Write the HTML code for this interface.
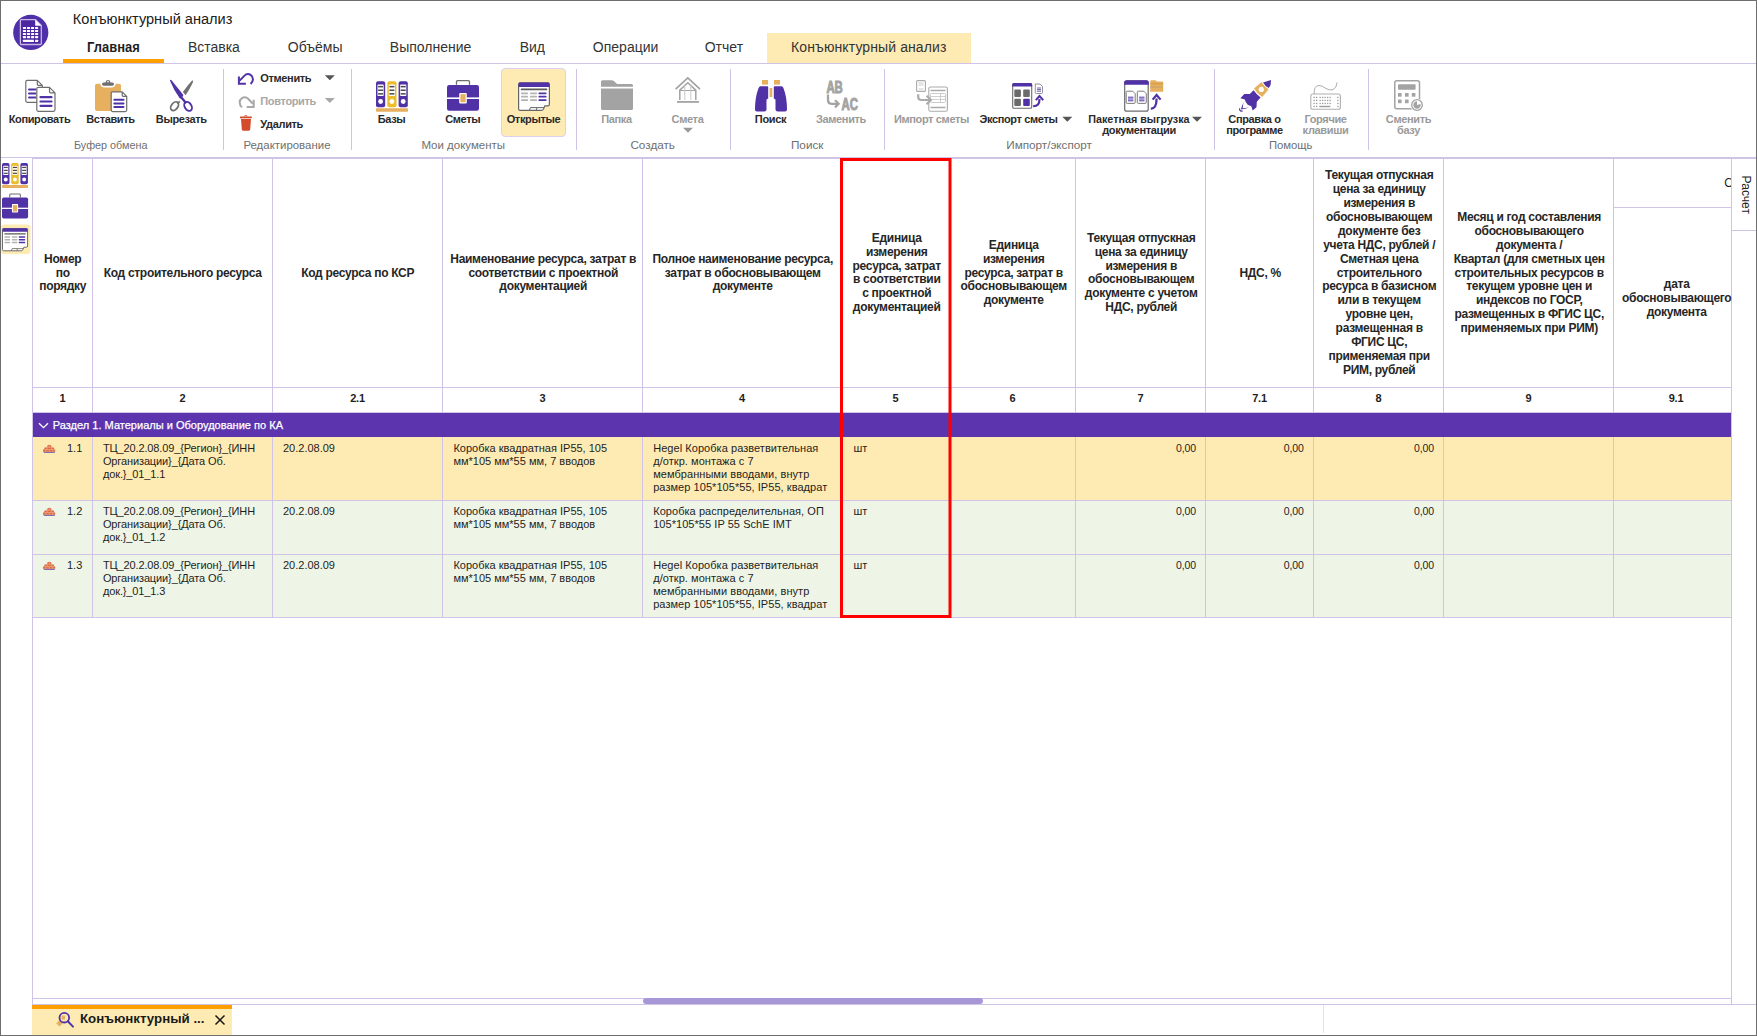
<!DOCTYPE html>
<html><head><meta charset="utf-8"><title>Конъюнктурный анализ</title>
<style>
html,body{margin:0;padding:0;width:1757px;height:1036px;overflow:hidden;background:#fff;}
svg{display:block;font-family:"Liberation Sans", sans-serif;}
</style></head><body>
<svg width="1757" height="1036" viewBox="0 0 1757 1036">
<rect x="0" y="0" width="1757" height="1036" fill="#ffffff" />
<circle cx="30.75" cy="32.45" r="17.6" fill="#5030a8"/>
<path d="M21.2 19.7 H35.4 L41.3 25.6 V43.6 Q41.3 44.5 40.4 44.5 H21.2 Q20.4 44.5 20.4 43.6 V20.6 Q20.4 19.7 21.2 19.7 Z" fill="#4a27a0" stroke="#c6b9e6" stroke-width="1.3"/>
<path d="M35.2 19.7 V25.8 H41.3 Z" fill="#ffffff"/>
<rect x="22.90" y="26.90" width="3.1" height="2.1" rx="0.4" fill="#ffffff"/>
<rect x="26.95" y="26.90" width="3.1" height="2.1" rx="0.4" fill="#ffffff"/>
<rect x="31.00" y="26.90" width="3.1" height="2.1" rx="0.4" fill="#ffffff"/>
<rect x="35.05" y="26.90" width="3.1" height="2.1" rx="0.4" fill="#ffffff"/>
<rect x="22.90" y="29.95" width="3.1" height="2.1" rx="0.4" fill="#ffffff"/>
<rect x="26.95" y="29.95" width="3.1" height="2.1" rx="0.4" fill="#ffffff"/>
<rect x="31.00" y="29.95" width="3.1" height="2.1" rx="0.4" fill="#ffffff"/>
<rect x="35.05" y="29.95" width="3.1" height="2.1" rx="0.4" fill="#ffffff"/>
<rect x="22.90" y="33.00" width="3.1" height="2.1" rx="0.4" fill="#ffffff"/>
<rect x="26.95" y="33.00" width="3.1" height="2.1" rx="0.4" fill="#ffffff"/>
<rect x="31.00" y="33.00" width="3.1" height="2.1" rx="0.4" fill="#ffffff"/>
<rect x="35.05" y="33.00" width="3.1" height="2.1" rx="0.4" fill="#ffffff"/>
<rect x="22.90" y="36.05" width="3.1" height="2.1" rx="0.4" fill="#ffffff"/>
<rect x="26.95" y="36.05" width="3.1" height="2.1" rx="0.4" fill="#ffffff"/>
<rect x="31.00" y="36.05" width="3.1" height="2.1" rx="0.4" fill="#ffffff"/>
<rect x="35.05" y="36.05" width="3.1" height="2.1" rx="0.4" fill="#ffffff"/>
<rect x="22.9" y="39.8" width="11.1" height="2.2" rx="0.4" fill="#ffffff"/>
<rect x="35.05" y="39.8" width="3.1" height="2.2" rx="0.4" fill="#ffffff"/>
<text x="72.8" y="24" fill="#202020" text-anchor="start" style="font-size:14px;font-weight:400;"  textLength="159.6" lengthAdjust="spacingAndGlyphs">Конъюнктурный анализ</text>
<rect x="767" y="33" width="204" height="30" fill="#feebb3" />
<text x="87.1" y="51.6" fill="#1e1e1e" text-anchor="start" style="font-size:14px;font-weight:700;"  textLength="52.6" lengthAdjust="spacingAndGlyphs">Главная</text>
<text x="213.9" y="51.6" fill="#333333" text-anchor="middle" style="font-size:14px;font-weight:400;letter-spacing:0px;" >Вставка</text>
<text x="315.2" y="51.6" fill="#333333" text-anchor="middle" style="font-size:14px;font-weight:400;letter-spacing:0px;" >Объёмы</text>
<text x="430.6" y="51.6" fill="#333333" text-anchor="middle" style="font-size:14px;font-weight:400;letter-spacing:0px;" >Выполнение</text>
<text x="532.3" y="51.6" fill="#333333" text-anchor="middle" style="font-size:14px;font-weight:400;letter-spacing:0px;" >Вид</text>
<text x="625.6" y="51.6" fill="#333333" text-anchor="middle" style="font-size:14px;font-weight:400;letter-spacing:0px;" >Операции</text>
<text x="723.9" y="51.6" fill="#333333" text-anchor="middle" style="font-size:14px;font-weight:400;letter-spacing:0px;" >Отчет</text>
<text x="868.8" y="51.6" fill="#333333" text-anchor="middle" style="font-size:14px;font-weight:400;letter-spacing:0.1px;" >Конъюнктурный анализ</text>
<rect x="63" y="59" width="101" height="4" fill="#ffa000" />
<rect x="1" y="63" width="1755" height="1" fill="#cfc3e8" />
<rect x="223" y="69" width="1" height="81" fill="#cfc3e8" />
<rect x="351" y="69" width="1" height="81" fill="#cfc3e8" />
<rect x="576" y="69" width="1" height="81" fill="#cfc3e8" />
<rect x="730" y="69" width="1" height="81" fill="#cfc3e8" />
<rect x="884" y="69" width="1" height="81" fill="#cfc3e8" />
<rect x="1214" y="69" width="1" height="81" fill="#cfc3e8" />
<rect x="1368" y="69" width="1" height="81" fill="#cfc3e8" />
<rect x="1" y="157" width="1755" height="1" fill="#cfc3e8" />
<text x="74.0" y="149" fill="#6f6f6f" text-anchor="start" style="font-size:11px;font-weight:400;"  textLength="73.5" lengthAdjust="spacingAndGlyphs">Буфер обмена</text>
<text x="243.4" y="149" fill="#6f6f6f" text-anchor="start" style="font-size:11px;font-weight:400;"  textLength="87.1" lengthAdjust="spacingAndGlyphs">Редактирование</text>
<text x="421.4" y="149" fill="#6f6f6f" text-anchor="start" style="font-size:11px;font-weight:400;"  textLength="83.7" lengthAdjust="spacingAndGlyphs">Мои документы</text>
<text x="630.4" y="149" fill="#6f6f6f" text-anchor="start" style="font-size:11px;font-weight:400;"  textLength="44.6" lengthAdjust="spacingAndGlyphs">Создать</text>
<text x="790.9" y="149" fill="#6f6f6f" text-anchor="start" style="font-size:11px;font-weight:400;"  textLength="32.6" lengthAdjust="spacingAndGlyphs">Поиск</text>
<text x="1006.3" y="149" fill="#6f6f6f" text-anchor="start" style="font-size:11px;font-weight:400;"  textLength="85.6" lengthAdjust="spacingAndGlyphs">Импорт/экспорт</text>
<text x="1269.0" y="149" fill="#6f6f6f" text-anchor="start" style="font-size:11px;font-weight:400;"  textLength="43.5" lengthAdjust="spacingAndGlyphs">Помощь</text>
<rect x="501.5" y="68.5" width="64" height="68" rx="3.5" fill="#feebb3" stroke="#dccff0" stroke-width="1"/>
<text x="39.5" y="122.8" fill="#2a2a2a" text-anchor="middle" style="font-size:11px;font-weight:700;letter-spacing:-0.35px;" >Копировать</text>
<text x="110.5" y="122.8" fill="#2a2a2a" text-anchor="middle" style="font-size:11px;font-weight:700;letter-spacing:-0.35px;" >Вставить</text>
<text x="181.3" y="122.8" fill="#2a2a2a" text-anchor="middle" style="font-size:11px;font-weight:700;letter-spacing:-0.35px;" >Вырезать</text>
<text x="391.5" y="122.8" fill="#2a2a2a" text-anchor="middle" style="font-size:11px;font-weight:700;letter-spacing:-0.35px;" >Базы</text>
<text x="462.7" y="122.8" fill="#2a2a2a" text-anchor="middle" style="font-size:11px;font-weight:700;letter-spacing:-0.35px;" >Сметы</text>
<text x="533.5" y="122.8" fill="#2a2a2a" text-anchor="middle" style="font-size:11px;font-weight:700;letter-spacing:-0.35px;" >Открытые</text>
<text x="616.5" y="122.8" fill="#9a9a9a" text-anchor="middle" style="font-size:11px;font-weight:700;letter-spacing:-0.35px;" >Папка</text>
<text x="687.5" y="122.8" fill="#9a9a9a" text-anchor="middle" style="font-size:11px;font-weight:700;letter-spacing:-0.35px;" >Смета</text>
<text x="770.5" y="122.8" fill="#2a2a2a" text-anchor="middle" style="font-size:11px;font-weight:700;letter-spacing:-0.35px;" >Поиск</text>
<text x="841" y="122.8" fill="#9a9a9a" text-anchor="middle" style="font-size:11px;font-weight:700;letter-spacing:-0.35px;" >Заменить</text>
<text x="931.5" y="122.8" fill="#9a9a9a" text-anchor="middle" style="font-size:11px;font-weight:700;letter-spacing:-0.35px;" >Импорт сметы</text>
<text x="1018.5" y="122.8" fill="#2a2a2a" text-anchor="middle" style="font-size:11px;font-weight:700;letter-spacing:-0.35px;" >Экспорт сметы</text>
<text x="1088.2" y="122.8" fill="#2a2a2a" text-anchor="start" style="font-size:11px;font-weight:700;"  textLength="101.4" lengthAdjust="spacingAndGlyphs">Пакетная выгрузка</text>
<text x="1139" y="133.6" fill="#2a2a2a" text-anchor="middle" style="font-size:11px;font-weight:700;letter-spacing:-0.35px;" >документации</text>
<text x="1254.5" y="122.8" fill="#2a2a2a" text-anchor="middle" style="font-size:11px;font-weight:700;letter-spacing:-0.35px;" >Справка о</text>
<text x="1254.5" y="133.6" fill="#2a2a2a" text-anchor="middle" style="font-size:11px;font-weight:700;letter-spacing:-0.35px;" >программе</text>
<text x="1325.5" y="122.8" fill="#9a9a9a" text-anchor="middle" style="font-size:11px;font-weight:700;letter-spacing:-0.35px;" >Горячие</text>
<text x="1325.5" y="133.6" fill="#9a9a9a" text-anchor="middle" style="font-size:11px;font-weight:700;letter-spacing:-0.35px;" >клавиши</text>
<text x="1408.5" y="122.8" fill="#9a9a9a" text-anchor="middle" style="font-size:11px;font-weight:700;letter-spacing:-0.35px;" >Сменить</text>
<text x="1408.5" y="133.6" fill="#9a9a9a" text-anchor="middle" style="font-size:11px;font-weight:700;letter-spacing:-0.35px;" >базу</text>
<text x="260.3" y="81.8" fill="#2a2a2a" text-anchor="start" style="font-size:11px;font-weight:700;letter-spacing:-0.35px;" >Отменить</text>
<text x="260.3" y="105" fill="#a8a8a8" text-anchor="start" style="font-size:11px;font-weight:700;letter-spacing:-0.35px;" >Повторить</text>
<text x="260.3" y="128.2" fill="#2a2a2a" text-anchor="start" style="font-size:11px;font-weight:700;letter-spacing:-0.35px;" >Удалить</text>
<path d="M324.8 75.2 H334.8 L329.8 80.2 Z" fill="#555555"/>
<path d="M324.8 98.0 H334.8 L329.8 103.0 Z" fill="#a8a8a8"/>
<path d="M683.0 127.80000000000001 H693.0 L688 132.8 Z" fill="#9a9a9a"/>
<path d="M1062.3 116.8 H1072.3 L1067.3 121.8 Z" fill="#555555"/>
<path d="M1192.0 116.8 H1202.0 L1197 121.8 Z" fill="#555555"/>
<rect x="32" y="413" width="1699" height="24" fill="#5c35ae" />
<rect x="32" y="437" width="1699" height="63" fill="#feebb3" />
<rect x="32" y="500" width="1699" height="117" fill="#eef5e6" />
<rect x="32" y="158" width="1724" height="1" fill="#cfc3e8" />
<rect x="32" y="387" width="1699" height="1" fill="#cfc3e8" />
<rect x="32" y="412" width="1699" height="1" fill="#cfc3e8" />
<rect x="32" y="500" width="1699" height="1" fill="#cfc3e8" />
<rect x="32" y="554" width="1699" height="1" fill="#cfc3e8" />
<rect x="32" y="617" width="1699" height="1" fill="#cfc3e8" />
<rect x="1613" y="207" width="118" height="1" fill="#cfc3e8" />
<rect x="32" y="158" width="1" height="846" fill="#cfc3e8" />
<rect x="92" y="158" width="1" height="254" fill="#cfc3e8" />
<rect x="92" y="437" width="1" height="180" fill="#cfc3e8" />
<rect x="272" y="158" width="1" height="254" fill="#cfc3e8" />
<rect x="272" y="437" width="1" height="180" fill="#cfc3e8" />
<rect x="442" y="158" width="1" height="254" fill="#cfc3e8" />
<rect x="442" y="437" width="1" height="180" fill="#cfc3e8" />
<rect x="642" y="158" width="1" height="254" fill="#cfc3e8" />
<rect x="642" y="437" width="1" height="180" fill="#cfc3e8" />
<rect x="841" y="158" width="1" height="254" fill="#cfc3e8" />
<rect x="841" y="437" width="1" height="180" fill="#cfc3e8" />
<rect x="949" y="158" width="1" height="254" fill="#cfc3e8" />
<rect x="949" y="437" width="1" height="180" fill="#cfc3e8" />
<rect x="1075" y="158" width="1" height="254" fill="#cfc3e8" />
<rect x="1075" y="437" width="1" height="180" fill="#cfc3e8" />
<rect x="1205" y="158" width="1" height="254" fill="#cfc3e8" />
<rect x="1205" y="437" width="1" height="180" fill="#cfc3e8" />
<rect x="1313" y="158" width="1" height="254" fill="#cfc3e8" />
<rect x="1313" y="437" width="1" height="180" fill="#cfc3e8" />
<rect x="1443" y="158" width="1" height="254" fill="#cfc3e8" />
<rect x="1443" y="437" width="1" height="180" fill="#cfc3e8" />
<rect x="1613" y="158" width="1" height="254" fill="#cfc3e8" />
<rect x="1613" y="437" width="1" height="180" fill="#cfc3e8" />
<rect x="1731" y="158" width="1" height="846" fill="#cfc3e8" />
<rect x="32" y="998" width="1699" height="1" fill="#cfc3e8" />
<rect x="32" y="1004" width="1724" height="1" fill="#cfc3e8" />
<rect x="1731" y="230" width="25" height="1" fill="#cfc3e8" />
<text x="62.7" y="262.6" fill="#262626" text-anchor="middle" style="font-size:12px;font-weight:700;letter-spacing:-0.3px;" >Номер</text>
<text x="62.7" y="276.5" fill="#262626" text-anchor="middle" style="font-size:12px;font-weight:700;letter-spacing:-0.3px;" >по</text>
<text x="62.7" y="290.4" fill="#262626" text-anchor="middle" style="font-size:12px;font-weight:700;letter-spacing:-0.3px;" >порядку</text>
<text x="182.7" y="276.5" fill="#262626" text-anchor="middle" style="font-size:12px;font-weight:700;letter-spacing:-0.3px;" >Код строительного ресурса</text>
<text x="357.7" y="276.5" fill="#262626" text-anchor="middle" style="font-size:12px;font-weight:700;letter-spacing:-0.3px;" >Код ресурса по КСР</text>
<text x="543.2" y="262.6" fill="#262626" text-anchor="middle" style="font-size:12px;font-weight:700;letter-spacing:-0.3px;" >Наименование ресурса, затрат в</text>
<text x="543.2" y="276.5" fill="#262626" text-anchor="middle" style="font-size:12px;font-weight:700;letter-spacing:-0.3px;" >соответствии с проектной</text>
<text x="543.2" y="290.4" fill="#262626" text-anchor="middle" style="font-size:12px;font-weight:700;letter-spacing:-0.3px;" >документацией</text>
<text x="742.7" y="262.6" fill="#262626" text-anchor="middle" style="font-size:12px;font-weight:700;letter-spacing:-0.3px;" >Полное наименование ресурса,</text>
<text x="742.7" y="276.5" fill="#262626" text-anchor="middle" style="font-size:12px;font-weight:700;letter-spacing:-0.3px;" >затрат в обосновывающем</text>
<text x="742.7" y="290.4" fill="#262626" text-anchor="middle" style="font-size:12px;font-weight:700;letter-spacing:-0.3px;" >документе</text>
<text x="896.7" y="241.75" fill="#262626" text-anchor="middle" style="font-size:12px;font-weight:700;letter-spacing:-0.3px;" >Единица</text>
<text x="896.7" y="255.65" fill="#262626" text-anchor="middle" style="font-size:12px;font-weight:700;letter-spacing:-0.3px;" >измерения</text>
<text x="896.7" y="269.55" fill="#262626" text-anchor="middle" style="font-size:12px;font-weight:700;letter-spacing:-0.3px;" >ресурса, затрат</text>
<text x="896.7" y="283.45" fill="#262626" text-anchor="middle" style="font-size:12px;font-weight:700;letter-spacing:-0.3px;" >в соответствии</text>
<text x="896.7" y="297.35" fill="#262626" text-anchor="middle" style="font-size:12px;font-weight:700;letter-spacing:-0.3px;" >с проектной</text>
<text x="896.7" y="311.25" fill="#262626" text-anchor="middle" style="font-size:12px;font-weight:700;letter-spacing:-0.3px;" >документацией</text>
<text x="1013.7" y="248.7" fill="#262626" text-anchor="middle" style="font-size:12px;font-weight:700;letter-spacing:-0.3px;" >Единица</text>
<text x="1013.7" y="262.6" fill="#262626" text-anchor="middle" style="font-size:12px;font-weight:700;letter-spacing:-0.3px;" >измерения</text>
<text x="1013.7" y="276.5" fill="#262626" text-anchor="middle" style="font-size:12px;font-weight:700;letter-spacing:-0.3px;" >ресурса, затрат в</text>
<text x="1013.7" y="290.4" fill="#262626" text-anchor="middle" style="font-size:12px;font-weight:700;letter-spacing:-0.3px;" >обосновывающем</text>
<text x="1013.7" y="304.3" fill="#262626" text-anchor="middle" style="font-size:12px;font-weight:700;letter-spacing:-0.3px;" >документе</text>
<text x="1141.2" y="241.75" fill="#262626" text-anchor="middle" style="font-size:12px;font-weight:700;letter-spacing:-0.3px;" >Текущая отпускная</text>
<text x="1141.2" y="255.65" fill="#262626" text-anchor="middle" style="font-size:12px;font-weight:700;letter-spacing:-0.3px;" >цена за единицу</text>
<text x="1141.2" y="269.55" fill="#262626" text-anchor="middle" style="font-size:12px;font-weight:700;letter-spacing:-0.3px;" >измерения в</text>
<text x="1141.2" y="283.45" fill="#262626" text-anchor="middle" style="font-size:12px;font-weight:700;letter-spacing:-0.3px;" >обосновывающем</text>
<text x="1141.2" y="297.35" fill="#262626" text-anchor="middle" style="font-size:12px;font-weight:700;letter-spacing:-0.3px;" >документе с учетом</text>
<text x="1141.2" y="311.25" fill="#262626" text-anchor="middle" style="font-size:12px;font-weight:700;letter-spacing:-0.3px;" >НДС, рублей</text>
<text x="1260.2" y="276.5" fill="#262626" text-anchor="middle" style="font-size:12px;font-weight:700;letter-spacing:-0.3px;" >НДС, %</text>
<text x="1379.2" y="179.2" fill="#262626" text-anchor="middle" style="font-size:12px;font-weight:700;letter-spacing:-0.3px;" >Текущая отпускная</text>
<text x="1379.2" y="193.1" fill="#262626" text-anchor="middle" style="font-size:12px;font-weight:700;letter-spacing:-0.3px;" >цена за единицу</text>
<text x="1379.2" y="207.0" fill="#262626" text-anchor="middle" style="font-size:12px;font-weight:700;letter-spacing:-0.3px;" >измерения в</text>
<text x="1379.2" y="220.9" fill="#262626" text-anchor="middle" style="font-size:12px;font-weight:700;letter-spacing:-0.3px;" >обосновывающем</text>
<text x="1379.2" y="234.8" fill="#262626" text-anchor="middle" style="font-size:12px;font-weight:700;letter-spacing:-0.3px;" >документе без</text>
<text x="1379.2" y="248.7" fill="#262626" text-anchor="middle" style="font-size:12px;font-weight:700;letter-spacing:-0.3px;" >учета НДС, рублей /</text>
<text x="1379.2" y="262.6" fill="#262626" text-anchor="middle" style="font-size:12px;font-weight:700;letter-spacing:-0.3px;" >Сметная цена</text>
<text x="1379.2" y="276.5" fill="#262626" text-anchor="middle" style="font-size:12px;font-weight:700;letter-spacing:-0.3px;" >строительного</text>
<text x="1379.2" y="290.4" fill="#262626" text-anchor="middle" style="font-size:12px;font-weight:700;letter-spacing:-0.3px;" >ресурса в базисном</text>
<text x="1379.2" y="304.3" fill="#262626" text-anchor="middle" style="font-size:12px;font-weight:700;letter-spacing:-0.3px;" >или в текущем</text>
<text x="1379.2" y="318.2" fill="#262626" text-anchor="middle" style="font-size:12px;font-weight:700;letter-spacing:-0.3px;" >уровне цен,</text>
<text x="1379.2" y="332.1" fill="#262626" text-anchor="middle" style="font-size:12px;font-weight:700;letter-spacing:-0.3px;" >размещенная в</text>
<text x="1379.2" y="346.0" fill="#262626" text-anchor="middle" style="font-size:12px;font-weight:700;letter-spacing:-0.3px;" >ФГИС ЦС,</text>
<text x="1379.2" y="359.9" fill="#262626" text-anchor="middle" style="font-size:12px;font-weight:700;letter-spacing:-0.3px;" >применяемая при</text>
<text x="1379.2" y="373.8" fill="#262626" text-anchor="middle" style="font-size:12px;font-weight:700;letter-spacing:-0.3px;" >РИМ, рублей</text>
<text x="1529.2" y="220.9" fill="#262626" text-anchor="middle" style="font-size:12px;font-weight:700;letter-spacing:-0.3px;" >Месяц и год составления</text>
<text x="1529.2" y="234.8" fill="#262626" text-anchor="middle" style="font-size:12px;font-weight:700;letter-spacing:-0.3px;" >обосновывающего</text>
<text x="1529.2" y="248.7" fill="#262626" text-anchor="middle" style="font-size:12px;font-weight:700;letter-spacing:-0.3px;" >документа /</text>
<text x="1529.2" y="262.6" fill="#262626" text-anchor="middle" style="font-size:12px;font-weight:700;letter-spacing:-0.3px;" >Квартал (для сметных цен</text>
<text x="1529.2" y="276.5" fill="#262626" text-anchor="middle" style="font-size:12px;font-weight:700;letter-spacing:-0.3px;" >строительных ресурсов в</text>
<text x="1529.2" y="290.4" fill="#262626" text-anchor="middle" style="font-size:12px;font-weight:700;letter-spacing:-0.3px;" >текущем уровне цен и</text>
<text x="1529.2" y="304.3" fill="#262626" text-anchor="middle" style="font-size:12px;font-weight:700;letter-spacing:-0.3px;" >индексов по ГОСР,</text>
<text x="1529.2" y="318.2" fill="#262626" text-anchor="middle" style="font-size:12px;font-weight:700;letter-spacing:-0.3px;" >размещенных в ФГИС ЦС,</text>
<text x="1529.2" y="332.1" fill="#262626" text-anchor="middle" style="font-size:12px;font-weight:700;letter-spacing:-0.3px;" >применяемых при РИМ)</text>
<text x="1676.7" y="288.1" fill="#262626" text-anchor="middle" style="font-size:12px;font-weight:700;letter-spacing:-0.3px;" >дата</text>
<text x="1676.7" y="302.0" fill="#262626" text-anchor="middle" style="font-size:12px;font-weight:700;letter-spacing:-0.3px;" >обосновывающего</text>
<text x="1676.7" y="315.9" fill="#262626" text-anchor="middle" style="font-size:12px;font-weight:700;letter-spacing:-0.3px;" >документа</text>
<clipPath id="c91"><rect x="1614" y="159" width="117" height="48"/></clipPath>
<text x="1724.2" y="186.6" fill="#1e1e1e" text-anchor="start" style="font-size:12px;font-weight:400;" clip-path="url(#c91)">О</text>
<text x="62.5" y="401.8" fill="#1e1e1e" text-anchor="middle" style="font-size:11px;font-weight:700;letter-spacing:-0.2px;" >1</text>
<text x="182.5" y="401.8" fill="#1e1e1e" text-anchor="middle" style="font-size:11px;font-weight:700;letter-spacing:-0.2px;" >2</text>
<text x="357.5" y="401.8" fill="#1e1e1e" text-anchor="middle" style="font-size:11px;font-weight:700;letter-spacing:-0.2px;" >2.1</text>
<text x="542.5" y="401.8" fill="#1e1e1e" text-anchor="middle" style="font-size:11px;font-weight:700;letter-spacing:-0.2px;" >3</text>
<text x="742.0" y="401.8" fill="#1e1e1e" text-anchor="middle" style="font-size:11px;font-weight:700;letter-spacing:-0.2px;" >4</text>
<text x="895.5" y="401.8" fill="#1e1e1e" text-anchor="middle" style="font-size:11px;font-weight:700;letter-spacing:-0.2px;" >5</text>
<text x="1012.5" y="401.8" fill="#1e1e1e" text-anchor="middle" style="font-size:11px;font-weight:700;letter-spacing:-0.2px;" >6</text>
<text x="1140.5" y="401.8" fill="#1e1e1e" text-anchor="middle" style="font-size:11px;font-weight:700;letter-spacing:-0.2px;" >7</text>
<text x="1259.5" y="401.8" fill="#1e1e1e" text-anchor="middle" style="font-size:11px;font-weight:700;letter-spacing:-0.2px;" >7.1</text>
<text x="1378.5" y="401.8" fill="#1e1e1e" text-anchor="middle" style="font-size:11px;font-weight:700;letter-spacing:-0.2px;" >8</text>
<text x="1528.5" y="401.8" fill="#1e1e1e" text-anchor="middle" style="font-size:11px;font-weight:700;letter-spacing:-0.2px;" >9</text>
<text x="1676" y="401.8" fill="#1e1e1e" text-anchor="middle" style="font-size:11px;font-weight:700;letter-spacing:-0.2px;" >9.1</text>
<path d="M39 423.2 L43.5 427.7 L48 423.2" fill="none" stroke="#ffffff" stroke-width="1.3"/>
<text x="52.8" y="428.6" fill="#ffffff" text-anchor="start" style="font-size:11px;font-weight:400;" stroke="#ffffff" stroke-width="0.25" textLength="230.2" lengthAdjust="spacingAndGlyphs">Раздел 1. Материалы и Оборудование по КА</text>
<text x="82.3" y="452" fill="#1e1e1e" text-anchor="end" style="font-size:11px;font-weight:400;" >1.1</text>
<text x="102.9" y="452" fill="#1e1e1e" text-anchor="start" style="font-size:11px;font-weight:400;letter-spacing:-0.12px;" >ТЦ_20.2.08.09_{Регион}_{ИНН</text>
<text x="102.9" y="465" fill="#1e1e1e" text-anchor="start" style="font-size:11px;font-weight:400;letter-spacing:-0.12px;" >Организации}_{Дата Об.</text>
<text x="102.9" y="478" fill="#1e1e1e" text-anchor="start" style="font-size:11px;font-weight:400;letter-spacing:-0.12px;" >док.}_01_1.1</text>
<text x="283" y="452" fill="#1e1e1e" text-anchor="start" style="font-size:11px;font-weight:400;" >20.2.08.09</text>
<text x="453.4" y="452" fill="#1e1e1e" text-anchor="start" style="font-size:11px;font-weight:400;" >Коробка квадратная IP55, 105</text>
<text x="453.4" y="465" fill="#1e1e1e" text-anchor="start" style="font-size:11px;font-weight:400;" >мм*105 мм*55 мм, 7 вводов</text>
<text x="653.2" y="452" fill="#1e1e1e" text-anchor="start" style="font-size:11px;font-weight:400;letter-spacing:0.05px;" >Hegel Коробка разветвительная</text>
<text x="653.2" y="465" fill="#1e1e1e" text-anchor="start" style="font-size:11px;font-weight:400;letter-spacing:0.05px;" >д/откр. монтажа с 7</text>
<text x="653.2" y="478" fill="#1e1e1e" text-anchor="start" style="font-size:11px;font-weight:400;letter-spacing:0.05px;" >мембранными вводами, внутр</text>
<text x="653.2" y="491" fill="#1e1e1e" text-anchor="start" style="font-size:11px;font-weight:400;letter-spacing:0.05px;" >размер 105*105*55, IP55, квадрат</text>
<text x="853.4" y="452" fill="#1e1e1e" text-anchor="start" style="font-size:11px;font-weight:400;" >шт</text>
<text x="1196" y="452" fill="#1e1e1e" text-anchor="end" style="font-size:10.5px;font-weight:400;letter-spacing:-0.1px;" >0,00</text>
<text x="1303.7" y="452" fill="#1e1e1e" text-anchor="end" style="font-size:10.5px;font-weight:400;letter-spacing:-0.1px;" >0,00</text>
<text x="1434" y="452" fill="#1e1e1e" text-anchor="end" style="font-size:10.5px;font-weight:400;letter-spacing:-0.1px;" >0,00</text>
<g transform="translate(0 444.8) scale(1 0.86) translate(0 -444.8)"><path d="M47.6 445.2 Q49.3 444.2 51 445.2 L51.6 447.6 L53.6 447.8 L54.4 450.40000000000003 L55.2 450.6 L55.2 453.0 H43 L43 450.6 L43.8 450.40000000000003 L44.8 447.8 L47 447.6 Z" fill="#dc6a45"/><path d="M46.2 447.7 H52.6 M44.2 450.40000000000003 H54.2 M49.3 445.0 V447.7 M47.4 447.7 L46.9 450.40000000000003 M51.2 447.7 L51.7 450.40000000000003 M46 450.40000000000003 L45.6 453.0 M49.3 450.40000000000003 V453.0 M52.6 450.40000000000003 L53 453.0" stroke="#f1b48c" stroke-width="0.7"/></g><rect x="43.8" y="451.85" width="11" height="1.1" fill="#7d6aa8"/>
<text x="82.3" y="515" fill="#1e1e1e" text-anchor="end" style="font-size:11px;font-weight:400;" >1.2</text>
<text x="102.9" y="515" fill="#1e1e1e" text-anchor="start" style="font-size:11px;font-weight:400;letter-spacing:-0.12px;" >ТЦ_20.2.08.09_{Регион}_{ИНН</text>
<text x="102.9" y="528" fill="#1e1e1e" text-anchor="start" style="font-size:11px;font-weight:400;letter-spacing:-0.12px;" >Организации}_{Дата Об.</text>
<text x="102.9" y="541" fill="#1e1e1e" text-anchor="start" style="font-size:11px;font-weight:400;letter-spacing:-0.12px;" >док.}_01_1.2</text>
<text x="283" y="515" fill="#1e1e1e" text-anchor="start" style="font-size:11px;font-weight:400;" >20.2.08.09</text>
<text x="453.4" y="515" fill="#1e1e1e" text-anchor="start" style="font-size:11px;font-weight:400;" >Коробка квадратная IP55, 105</text>
<text x="453.4" y="528" fill="#1e1e1e" text-anchor="start" style="font-size:11px;font-weight:400;" >мм*105 мм*55 мм, 7 вводов</text>
<text x="653.2" y="515" fill="#1e1e1e" text-anchor="start" style="font-size:11px;font-weight:400;letter-spacing:0.05px;" >Коробка распределительная, ОП</text>
<text x="653.2" y="528" fill="#1e1e1e" text-anchor="start" style="font-size:11px;font-weight:400;letter-spacing:0.05px;" >105*105*55 IP 55 SchE IMT</text>
<text x="853.4" y="515" fill="#1e1e1e" text-anchor="start" style="font-size:11px;font-weight:400;" >шт</text>
<text x="1196" y="515" fill="#1e1e1e" text-anchor="end" style="font-size:10.5px;font-weight:400;letter-spacing:-0.1px;" >0,00</text>
<text x="1303.7" y="515" fill="#1e1e1e" text-anchor="end" style="font-size:10.5px;font-weight:400;letter-spacing:-0.1px;" >0,00</text>
<text x="1434" y="515" fill="#1e1e1e" text-anchor="end" style="font-size:10.5px;font-weight:400;letter-spacing:-0.1px;" >0,00</text>
<g transform="translate(0 507.8) scale(1 0.86) translate(0 -507.8)"><path d="M47.6 508.2 Q49.3 507.2 51 508.2 L51.6 510.6 L53.6 510.8 L54.4 513.4 L55.2 513.6 L55.2 516.0 H43 L43 513.6 L43.8 513.4 L44.8 510.8 L47 510.6 Z" fill="#dc6a45"/><path d="M46.2 510.7 H52.6 M44.2 513.4 H54.2 M49.3 508.0 V510.7 M47.4 510.7 L46.9 513.4 M51.2 510.7 L51.7 513.4 M46 513.4 L45.6 516.0 M49.3 513.4 V516.0 M52.6 513.4 L53 516.0" stroke="#f1b48c" stroke-width="0.7"/></g><rect x="43.8" y="514.85" width="11" height="1.1" fill="#7d6aa8"/>
<text x="82.3" y="569" fill="#1e1e1e" text-anchor="end" style="font-size:11px;font-weight:400;" >1.3</text>
<text x="102.9" y="569" fill="#1e1e1e" text-anchor="start" style="font-size:11px;font-weight:400;letter-spacing:-0.12px;" >ТЦ_20.2.08.09_{Регион}_{ИНН</text>
<text x="102.9" y="582" fill="#1e1e1e" text-anchor="start" style="font-size:11px;font-weight:400;letter-spacing:-0.12px;" >Организации}_{Дата Об.</text>
<text x="102.9" y="595" fill="#1e1e1e" text-anchor="start" style="font-size:11px;font-weight:400;letter-spacing:-0.12px;" >док.}_01_1.3</text>
<text x="283" y="569" fill="#1e1e1e" text-anchor="start" style="font-size:11px;font-weight:400;" >20.2.08.09</text>
<text x="453.4" y="569" fill="#1e1e1e" text-anchor="start" style="font-size:11px;font-weight:400;" >Коробка квадратная IP55, 105</text>
<text x="453.4" y="582" fill="#1e1e1e" text-anchor="start" style="font-size:11px;font-weight:400;" >мм*105 мм*55 мм, 7 вводов</text>
<text x="653.2" y="569" fill="#1e1e1e" text-anchor="start" style="font-size:11px;font-weight:400;letter-spacing:0.05px;" >Hegel Коробка разветвительная</text>
<text x="653.2" y="582" fill="#1e1e1e" text-anchor="start" style="font-size:11px;font-weight:400;letter-spacing:0.05px;" >д/откр. монтажа с 7</text>
<text x="653.2" y="595" fill="#1e1e1e" text-anchor="start" style="font-size:11px;font-weight:400;letter-spacing:0.05px;" >мембранными вводами, внутр</text>
<text x="653.2" y="608" fill="#1e1e1e" text-anchor="start" style="font-size:11px;font-weight:400;letter-spacing:0.05px;" >размер 105*105*55, IP55, квадрат</text>
<text x="853.4" y="569" fill="#1e1e1e" text-anchor="start" style="font-size:11px;font-weight:400;" >шт</text>
<text x="1196" y="569" fill="#1e1e1e" text-anchor="end" style="font-size:10.5px;font-weight:400;letter-spacing:-0.1px;" >0,00</text>
<text x="1303.7" y="569" fill="#1e1e1e" text-anchor="end" style="font-size:10.5px;font-weight:400;letter-spacing:-0.1px;" >0,00</text>
<text x="1434" y="569" fill="#1e1e1e" text-anchor="end" style="font-size:10.5px;font-weight:400;letter-spacing:-0.1px;" >0,00</text>
<g transform="translate(0 561.8) scale(1 0.86) translate(0 -561.8)"><path d="M47.6 562.1999999999999 Q49.3 561.1999999999999 51 562.1999999999999 L51.6 564.5999999999999 L53.6 564.8 L54.4 567.4 L55.2 567.5999999999999 L55.2 570.0 H43 L43 567.5999999999999 L43.8 567.4 L44.8 564.8 L47 564.5999999999999 Z" fill="#dc6a45"/><path d="M46.2 564.6999999999999 H52.6 M44.2 567.4 H54.2 M49.3 562.0 V564.6999999999999 M47.4 564.6999999999999 L46.9 567.4 M51.2 564.6999999999999 L51.7 567.4 M46 567.4 L45.6 570.0 M49.3 567.4 V570.0 M52.6 567.4 L53 570.0" stroke="#f1b48c" stroke-width="0.7"/></g><rect x="43.8" y="568.8499999999999" width="11" height="1.1" fill="#7d6aa8"/>
<rect x="841.5" y="159.5" width="108.5" height="457" fill="none" stroke="#ff0000" stroke-width="3"/>
<text x="0" y="0" fill="#222" style="font-size:13px;font-weight:400;" transform="translate(1741.5 175.5) rotate(90)" textLength="38.5" lengthAdjust="spacingAndGlyphs">Расчет</text>
<rect x="643" y="998" width="340" height="6" rx="3" fill="#a897d6"/>
<rect x="32" y="1005" width="200" height="30" fill="#feebb3" />
<rect x="32" y="1005" width="200" height="4" fill="#ffa000" />
<rect x="1323" y="1005" width="1" height="28" fill="#e3e3e3" />
<text x="80.0" y="1023.4" fill="#1a1a1a" text-anchor="start" style="font-size:13px;font-weight:700;"  textLength="124.5" lengthAdjust="spacingAndGlyphs">Конъюнктурный ...</text>
<path d="M215.5 1015.5 L224.5 1024.5 M224.5 1015.5 L215.5 1024.5" stroke="#1a1a1a" stroke-width="1.5"/>
<path d="M27.3 80.3 H37.3 L42.3 85.3 V100.8 Q42.3 102.3 40.8 102.3 H27.3 Q25.8 102.3 25.8 100.8 V81.8 Q25.8 80.3 27.3 80.3 Z M37.3 80.3 V84.3 Q37.3 85.3 38.3 85.3 H42.3" fill="#ffffff" stroke="#6e6e6e" stroke-width="1.2" stroke-linejoin="round"/>
<line x1="29" y1="89.6" x2="35.5" y2="89.6" stroke="#5131a6" stroke-width="2" stroke-linecap="round"/>
<line x1="29" y1="93.6" x2="35.5" y2="93.6" stroke="#5131a6" stroke-width="2" stroke-linecap="round"/>
<line x1="29" y1="97.6" x2="35.5" y2="97.6" stroke="#5131a6" stroke-width="2" stroke-linecap="round"/>
<path d="M38.3 87.3 H49.5 L55.0 92.8 V109.8 Q55.0 111.3 53.5 111.3 H38.3 Q36.8 111.3 36.8 109.8 V88.8 Q36.8 87.3 38.3 87.3 Z M49.5 87.3 V91.8 Q49.5 92.8 50.5 92.8 H55.0" fill="#ffffff" stroke="#6e6e6e" stroke-width="1.2" stroke-linejoin="round"/>
<line x1="40.5" y1="97.2" x2="51.5" y2="97.2" stroke="#5131a6" stroke-width="2.2" stroke-linecap="round"/>
<line x1="40.5" y1="101.5" x2="51.5" y2="101.5" stroke="#5131a6" stroke-width="2.2" stroke-linecap="round"/>
<line x1="40.5" y1="105.8" x2="51.5" y2="105.8" stroke="#5131a6" stroke-width="2.2" stroke-linecap="round"/>
<path d="M97 83.8 H100.4 Q100.6 87.6 104.5 87.6 H111.5 Q115.4 87.6 115.6 83.8 H119 Q121 83.8 121 85.8 V109 Q121 111 119 111 H97 Q95 111 95 109 V85.8 Q95 83.8 97 83.8 Z" fill="#e6b05e"/>
<rect x="102" y="82.4" width="12" height="3.3" rx="1.65" fill="#6f6f6f"/>
<path d="M105.6 83 Q105.6 80 108 80 Q110.4 80 110.4 83 Z" fill="#6f6f6f"/>
<circle cx="108" cy="81.6" r="0.85" fill="#ffffff"/>
<path d="M112.7 91.8 H122.2 L126.7 96.3 V110.1 Q126.7 111.6 125.2 111.6 H112.7 Q111.2 111.6 111.2 110.1 V93.3 Q111.2 91.8 112.7 91.8 Z M122.2 91.8 V95.3 Q122.2 96.3 123.2 96.3 H126.7" fill="#ffffff" stroke="#6e6e6e" stroke-width="1.2" stroke-linejoin="round"/>
<line x1="114.3" y1="99.8" x2="123.5" y2="99.8" stroke="#5131a6" stroke-width="2" stroke-linecap="round"/>
<line x1="114.3" y1="103.4" x2="123.5" y2="103.4" stroke="#5131a6" stroke-width="2" stroke-linecap="round"/>
<line x1="114.3" y1="107" x2="123.5" y2="107" stroke="#5131a6" stroke-width="2" stroke-linecap="round"/>
<path d="M169.9 80.4 Q170.6 79.4 171.5 80.3 L183.4 95 L182.3 97.2 L180 98.8 Q174 90.5 169.9 80.4 Z" fill="#5131a6"/>
<path d="M181.2 97.2 L186.2 103.2" stroke="#5131a6" stroke-width="2.3"/>
<ellipse cx="188.1" cy="106.4" rx="3.3" ry="4.9" transform="rotate(-33 188.1 106.4)" fill="none" stroke="#5131a6" stroke-width="1.9"/>
<path d="M192.3 80.3 Q193.6 80.6 192.8 82.4 Q189.6 89.5 185.6 95.2 L182.9 92 Q187.5 85.5 192.3 80.3 Z" fill="#707070"/>
<path d="M179.8 101.3 L177.2 103.6" stroke="#707070" stroke-width="1.8"/>
<ellipse cx="174.6" cy="106.2" rx="3.2" ry="4.9" transform="rotate(38 174.6 106.2)" fill="none" stroke="#707070" stroke-width="1.8"/>
<g transform="translate(238 73.8)"><path d="M12.6 10.3 C15.6 7.8 15.8 3.2 12.6 1.1 C10.3 -0.4 7.9 0.4 6.5 1.8 L1.7 6.8" fill="none" stroke="#5131a6" stroke-width="2"/><path d="M0.9 2.8 V9.9 H7.9" fill="none" stroke="#5131a6" stroke-width="2"/></g>
<g transform="translate(254.6 97) scale(-1 1)"><path d="M12.6 10.3 C15.6 7.8 15.8 3.2 12.6 1.1 C10.3 -0.4 7.9 0.4 6.5 1.8 L1.7 6.8" fill="none" stroke="#a8a8a8" stroke-width="2"/><path d="M0.9 2.8 V9.9 H7.9" fill="none" stroke="#a8a8a8" stroke-width="2"/></g>
<path d="M240 116.5 H251.8 V118.3 H240 Z" fill="#d44b2c"/>
<path d="M244 116.3 Q244 115.3 245.8 115.3 Q247.6 115.3 247.6 116.3 Z" fill="#d44b2c"/>
<path d="M241 119 H251 L250.2 129.3 Q250 130.8 248.5 130.8 H243.5 Q242 130.8 241.8 129.3 Z" fill="#d44b2c"/>
<rect x="376.0" y="81.2" width="9.2" height="26.0" rx="2.0" fill="#5131a6"/><rect x="377.5" y="84.60000000000001" width="6.2" height="11.4" rx="0.8" fill="#ffffff"/><rect x="378.1" y="85.9" width="5.0" height="1.5" fill="#4a4a4a"/><rect x="378.1" y="89.5" width="5.0" height="1.5" fill="#4a4a4a"/><rect x="378.1" y="93.10000000000001" width="5.0" height="1.5" fill="#4a4a4a"/><circle cx="380.6" cy="101.5" r="2.4" fill="#ffffff"/><rect x="387.3" y="81.2" width="9.2" height="26.0" rx="2.0" fill="#ecbd2a"/><rect x="388.8" y="84.60000000000001" width="6.2" height="11.4" rx="0.8" fill="#ffffff"/><rect x="389.40000000000003" y="85.9" width="5.0" height="1.5" fill="#4a4a4a"/><rect x="389.40000000000003" y="89.5" width="5.0" height="1.5" fill="#4a4a4a"/><rect x="389.40000000000003" y="93.10000000000001" width="5.0" height="1.5" fill="#4a4a4a"/><circle cx="391.90000000000003" cy="101.5" r="2.4" fill="#ffffff"/><rect x="398.6" y="81.2" width="9.2" height="26.0" rx="2.0" fill="#5131a6"/><rect x="400.1" y="84.60000000000001" width="6.2" height="11.4" rx="0.8" fill="#ffffff"/><rect x="400.70000000000005" y="85.9" width="5.0" height="1.5" fill="#4a4a4a"/><rect x="400.70000000000005" y="89.5" width="5.0" height="1.5" fill="#4a4a4a"/><rect x="400.70000000000005" y="93.10000000000001" width="5.0" height="1.5" fill="#4a4a4a"/><circle cx="403.20000000000005" cy="101.5" r="2.4" fill="#ffffff"/><rect x="376" y="108.2" width="32.0" height="3.6" rx="0.8" fill="#e6b05e"/>
<path d="M456.5 84.8 V81.6 Q456.5 80.6 457.5 80.6 H468.5 Q469.5 80.6 469.5 81.6 V84.8" fill="none" stroke="#6f6f6f" stroke-width="1.3"/><rect x="447" y="85.0" width="32.0" height="25.7" rx="2.2" fill="#5131a6"/><rect x="447" y="97.4" width="32.0" height="1.6" fill="#ffffff"/><rect x="459.2" y="93.0" width="7.6" height="10.4" rx="1.0" fill="#ffffff"/><rect x="460.4" y="94.2" width="5.2" height="8.0" fill="#e6b05e"/>
<path d="M518.6 84.3 Q518.6 82.89999999999999 520.0 82.89999999999999 H548.0 Q549.4 82.89999999999999 549.4 84.3 V104.3 Q549.4 105.9 548.0 105.9 H544.8 L543.6 108.9 Q543.1 110.3 541.6 110.3 H520.0 Q518.6 110.3 518.6 108.69999999999999 Z" fill="#ffffff" stroke="#666666" stroke-width="1.2"/><path d="M518.6 84.3 Q518.6 82.5 520.0 82.5 H548.0 Q549.4 82.5 549.4 84.3 V86.89999999999999 H518.6 Z" fill="#5131a6"/><rect x="520.8" y="88.6" width="26.4" height="1.7" rx="0.6" fill="#5a5a5a"/><rect x="521.0" y="92.39999999999999" width="7.0" height="1.8" rx="0.6" fill="#b4b4b4"/><rect x="530.0" y="92.39999999999999" width="7.0" height="1.8" rx="0.6" fill="#b4b4b4"/><rect x="538.5" y="92.39999999999999" width="8.0" height="1.8" rx="0.6" fill="#5131a6"/><rect x="521.0" y="95.8" width="7.0" height="1.8" rx="0.6" fill="#b4b4b4"/><rect x="530.0" y="95.8" width="7.0" height="1.8" rx="0.6" fill="#b4b4b4"/><rect x="538.5" y="95.8" width="8.0" height="1.8" rx="0.6" fill="#5131a6"/><rect x="521.0" y="99.2" width="7.0" height="1.8" rx="0.6" fill="#b4b4b4"/><rect x="530.0" y="99.2" width="7.0" height="1.8" rx="0.6" fill="#b4b4b4"/><rect x="538.5" y="99.2" width="8.0" height="1.8" rx="0.6" fill="#5131a6"/><path d="M529.4 110.3 L530.4 107.6 H544.0 M537.0 107.6 L536.2 110.3" fill="none" stroke="#666666" stroke-width="1.0"/>
<path d="M602.5 80.3 H611.5 Q613 80.3 614.5 81.6 L616.5 83.4 Q617.3 84 618.5 84 H631.5 Q633 84 633 85.5 V86.7 H601 V81.8 Q601 80.3 602.5 80.3 Z" fill="#a3a3a3"/>
<path d="M601 88.6 H633 V108.4 Q633 110 631.5 110 H602.5 Q601 110 601 108.4 Z" fill="#a3a3a3"/>
<path d="M675.6 89.2 L687.8 77.9 L700 89.2" fill="none" stroke="#a3a3a3" stroke-width="1.7"/>
<path d="M679.8 100 V90.2 L687.8 82.8 L695.8 90.2 V100" fill="none" stroke="#a3a3a3" stroke-width="1.5"/>
<path d="M679.8 90.5 H695.8" stroke="#a3a3a3" stroke-width="1"/>
<path d="M684.8 84.5 V100 M690.8 84.5 V100" stroke="#c8c8c8" stroke-width="1"/>
<rect x="677" y="101" width="22" height="1.8" fill="#a3a3a3"/>
<rect x="762" y="80" width="6" height="4.6" fill="#e6b05e"/>
<rect x="774" y="80" width="6" height="4.6" fill="#e6b05e"/>
<rect x="769.6" y="88" width="2.7" height="9" fill="#e6b05e"/>
<path d="M760.5 86.2 H767.2 Q768.2 86.2 768.2 87.2 V98.5 Q767 98.8 766.5 99.8 V109.8 Q766.2 111.6 764.4 111.6 H756.9 Q755 111.6 755 109.6 Q755 97 758.5 88.2 Q759.2 86.2 760.5 86.2 Z" fill="#5131a6"/>
<path d="M781.5 86.2 H774.8 Q773.8 86.2 773.8 87.2 V98.5 Q775 98.8 775.5 99.8 V109.8 Q775.8 111.6 777.6 111.6 H785.1 Q787 111.6 787 109.6 Q787 97 783.5 88.2 Q782.8 86.2 781.5 86.2 Z" fill="#5131a6"/>
<text x="826.4" y="92.8" fill="#a3a3a3" stroke="#a3a3a3" stroke-width="1" style="font-size:16px;font-weight:700;" textLength="16.4" lengthAdjust="spacingAndGlyphs">AB</text>
<text x="841.6" y="109.8" fill="#a3a3a3" stroke="#a3a3a3" stroke-width="1" style="font-size:16px;font-weight:700;" textLength="16.4" lengthAdjust="spacingAndGlyphs">AC</text>
<path d="M828 94.6 V100.3 Q828 103.8 831.5 103.8 H838" fill="none" stroke="#a3a3a3" stroke-width="2.3"/>
<path d="M835 100.2 L838.6 103.8 L835 107.4" fill="none" stroke="#a3a3a3" stroke-width="2.3"/>
<rect x="916.6" y="80.6" width="8.8" height="10.8" rx="1" fill="#fff" stroke="#ababab" stroke-width="1.1"/>
<path d="M918.5 83 H923.5 M918.5 85 H923.5 M918.5 89 H923.5" stroke="#c4c4c4" stroke-width="0.9"/>
<rect x="928.8" y="87" width="18.6" height="24.3" rx="1.8" fill="#fff" stroke="#ababab" stroke-width="1.1"/>
<path d="M930.5 90.5 H945.5 M930.5 107.5 H945.5" stroke="#ababab" stroke-width="1.3"/>
<rect x="930.5" y="93.5" width="15" height="9" rx="1" fill="none" stroke="#c4c4c4" stroke-width="0.9"/>
<path d="M930.5 96.5 H945.5 M930.5 99.5 H945.5 M940.5 93.5 V102.5" stroke="#c4c4c4" stroke-width="0.8"/>
<path d="M918.2 94.3 V97 Q918.2 100 921.5 100 H931" fill="none" stroke="#ababab" stroke-width="2.2"/>
<path d="M926.5 95.8 L931 100 L926.5 104.2" fill="none" stroke="#ababab" stroke-width="2"/>
<rect x="1012.7" y="83.6" width="19" height="24.7" rx="1.3" fill="#fff" stroke="#6c6c6c" stroke-width="1.1"/>
<path d="M1012.2 85 Q1012.2 83.1 1014 83.1 H1030.5 Q1032.2 83.1 1032.2 85 V86.5 H1012.2 Z" fill="#5131a6"/>
<rect x="1014.3" y="89.6" width="6.6" height="7.3" rx="1" fill="#6b6b6b"/>
<rect x="1023.2" y="89.6" width="6.6" height="7.3" rx="1" fill="#6b6b6b"/>
<rect x="1014.3" y="98.7" width="6.6" height="7.3" rx="1" fill="#6b6b6b"/>
<rect x="1023.2" y="98.7" width="6.6" height="7.3" rx="1" fill="#5131a6"/>
<path d="M1035.3 84 H1040 L1042.5 86.5 V92.5 Q1042.5 93.5 1041.5 93.5 H1036.3 Q1035.3 93.5 1035.3 92.5 Z" fill="#fff" stroke="#777" stroke-width="0.8"/>
<path d="M1037 88 H1041 M1037 89.6 H1041 M1037 91.2 H1041" stroke="#5131a6" stroke-width="0.8"/>
<path d="M1033.2 106.2 Q1039.5 106.5 1039.5 99" fill="none" stroke="#5131a6" stroke-width="2.2"/>
<path d="M1035.8 100.2 L1039.5 96 L1043.3 100.2" fill="none" stroke="#5131a6" stroke-width="2"/>
<rect x="1124.7" y="80.8" width="23.5" height="30.4" rx="2" fill="#fff" stroke="#6c6c6c" stroke-width="1.2"/>
<path d="M1124.1 82.7 Q1124.1 80.2 1126.5 80.2 H1146.3 Q1148.8 80.2 1148.8 82.7 V84.8 H1124.1 Z" fill="#5131a6"/>
<path d="M1127.2 91.2 H1132.7 L1135.2 93.7 V102.4 Q1135.2 103.4 1134.2 103.4 H1127.2 Q1126.2 103.4 1126.2 102.4 V92.2 Q1126.2 91.2 1127.2 91.2 Z" fill="#fff" stroke="#6c6c6c" stroke-width="0.9"/>
<path d="M1128.0 97.2 H1133.4 M1128.0 99 H1133.4 M1128.0 100.8 H1133.4" stroke="#5131a6" stroke-width="1"/>
<path d="M1138.3 91.2 H1143.8 L1146.3 93.7 V102.4 Q1146.3 103.4 1145.3 103.4 H1138.3 Q1137.3 103.4 1137.3 102.4 V92.2 Q1137.3 91.2 1138.3 91.2 Z" fill="#fff" stroke="#6c6c6c" stroke-width="0.9"/>
<path d="M1139.1 97.2 H1144.5 M1139.1 99 H1144.5 M1139.1 100.8 H1144.5" stroke="#5131a6" stroke-width="1"/>
<path d="M1150.2 81.5 Q1150.2 80.3 1151.4 80.3 H1155.5 L1157 81.5 H1162.3 Q1163.2 81.5 1163.2 82.5 V91.8 H1150.2 Z" fill="#e6b05e"/>
<path d="M1150.2 83.8 H1163.2" stroke="#c99540" stroke-width="0.8"/>
<path d="M1150.5 87 H1163" stroke="#888" stroke-width="0.7" stroke-dasharray="1 1"/>
<path d="M1150.8 108.6 Q1156.6 109 1156.6 98.5" fill="none" stroke="#5131a6" stroke-width="2.3"/>
<path d="M1152.6 99.6 L1156.6 95 L1160.6 99.6" fill="none" stroke="#5131a6" stroke-width="2.2"/>
<path d="M1263 82.6 L1271 80 L1270.6 85 L1268.8 88 Q1265 86.5 1263 82.6 Z" fill="#5131a6"/>
<path d="M1254 88.6 L1261.5 81.9 Q1264 86.6 1268.6 89.2 L1262.3 96.9 Q1257 94 1254 88.6 Z" fill="#e6b05e"/>
<circle cx="1261.3" cy="89.4" r="2.6" fill="#fff"/>
<path d="M1253.6 90.3 Q1257 95 1260.6 97.6 L1256.8 101.8 L1256.5 107.2 L1252.7 110.6 L1251.2 106 Q1249 105.5 1247.5 104.5 Q1245.5 102.5 1244.8 99.6 L1240.4 98.2 L1244.3 94.1 L1249.8 93.9 Z" fill="#5131a6"/>
<path d="M1243.8 102.3 Q1241.6 106 1241 109.4 Q1245 109.3 1248.9 107.6 Q1244.8 108.3 1242.7 108.3 Q1242.7 105 1243.8 102.3 Z" fill="#5131a6"/>
<path d="M1239.6 108.3 Q1239.2 111.2 1242.6 111.2" fill="none" stroke="#5131a6" stroke-width="1.2"/>
<rect x="1310.8" y="94" width="29.6" height="15.3" rx="2" fill="#fff" stroke="#b0b0b0" stroke-width="1.1"/>
<path d="M1314.2 94 Q1313.8 85.5 1319 85.5 Q1322 85.5 1326 88.5 Q1330 90.8 1333 89.6 Q1336.8 88 1337 82.5" fill="none" stroke="#a3a3a3" stroke-width="0.9"/>
<rect x="1313.5" y="96.8" width="1.3" height="1.3" fill="#9a9a9a"/>
<rect x="1316" y="96.8" width="1.3" height="1.3" fill="#9a9a9a"/>
<rect x="1319.5" y="96.8" width="1.3" height="1.3" fill="#9a9a9a"/>
<rect x="1322" y="96.8" width="1.3" height="1.3" fill="#9a9a9a"/>
<rect x="1324.5" y="96.8" width="1.3" height="1.3" fill="#9a9a9a"/>
<rect x="1327" y="96.8" width="1.3" height="1.3" fill="#9a9a9a"/>
<rect x="1329.5" y="96.8" width="1.3" height="1.3" fill="#9a9a9a"/>
<rect x="1337.2" y="96.8" width="1.3" height="1.3" fill="#9a9a9a"/>
<rect x="1313.5" y="99.8" width="1.3" height="1.3" fill="#9a9a9a"/>
<rect x="1316" y="99.8" width="1.3" height="1.3" fill="#9a9a9a"/>
<rect x="1319.5" y="99.8" width="1.3" height="1.3" fill="#9a9a9a"/>
<rect x="1322" y="99.8" width="1.3" height="1.3" fill="#9a9a9a"/>
<rect x="1324.5" y="99.8" width="1.3" height="1.3" fill="#9a9a9a"/>
<rect x="1327" y="99.8" width="1.3" height="1.3" fill="#9a9a9a"/>
<rect x="1329.5" y="99.8" width="1.3" height="1.3" fill="#9a9a9a"/>
<rect x="1337.2" y="99.8" width="1.3" height="1.3" fill="#9a9a9a"/>
<rect x="1313.5" y="102.8" width="1.3" height="1.3" fill="#9a9a9a"/>
<rect x="1316" y="102.8" width="1.3" height="1.3" fill="#9a9a9a"/>
<rect x="1319.5" y="102.8" width="1.3" height="1.3" fill="#9a9a9a"/>
<rect x="1322" y="102.8" width="1.3" height="1.3" fill="#9a9a9a"/>
<rect x="1324.5" y="102.8" width="1.3" height="1.3" fill="#9a9a9a"/>
<rect x="1327" y="102.8" width="1.3" height="1.3" fill="#9a9a9a"/>
<rect x="1329.5" y="102.8" width="1.3" height="1.3" fill="#9a9a9a"/>
<rect x="1337.2" y="102.8" width="1.3" height="1.3" fill="#9a9a9a"/>
<rect x="1313.5" y="105.8" width="1.3" height="1.3" fill="#9a9a9a"/>
<rect x="1316" y="105.8" width="1.3" height="1.3" fill="#9a9a9a"/>
<rect x="1337.2" y="105.8" width="1.3" height="1.3" fill="#9a9a9a"/>
<rect x="1319.3" y="105.8" width="11" height="1.4" fill="#9a9a9a"/>
<rect x="1394.8" y="80.8" width="24.7" height="28" rx="2" fill="#fff" stroke="#a3a3a3" stroke-width="1.5"/>
<rect x="1398" y="84.2" width="17.6" height="5.6" rx="1" fill="#a3a3a3"/>
<rect x="1398" y="93" width="3.6" height="3.7" fill="#a3a3a3"/>
<rect x="1405" y="93" width="3.6" height="3.7" fill="#a3a3a3"/>
<rect x="1411.8" y="93" width="3.6" height="3.7" fill="#a3a3a3"/>
<rect x="1398" y="99.5" width="3.6" height="3.7" fill="#a3a3a3"/>
<rect x="1405" y="99.5" width="3.6" height="3.7" fill="#a3a3a3"/>
<circle cx="1417" cy="105" r="6.6" fill="#fff"/>
<circle cx="1417" cy="105" r="5.3" fill="none" stroke="#a3a3a3" stroke-width="1.3"/>
<path d="M1417 101.3 A3.7 3.7 0 1 0 1420.6 104 L1417 105 Z" fill="#a3a3a3"/>
<rect x="2.0" y="163" width="7.497999999999999" height="21.189999999999998" rx="1.63" fill="#5131a6"/><rect x="3.2225" y="165.771" width="5.053" height="9.291" rx="0.652" fill="#ffffff"/><rect x="3.7115" y="166.8305" width="4.074999999999999" height="1.2225" fill="#4a4a4a"/><rect x="3.7115" y="169.7645" width="4.074999999999999" height="1.2225" fill="#4a4a4a"/><rect x="3.7115" y="172.6985" width="4.074999999999999" height="1.2225" fill="#4a4a4a"/><circle cx="5.749" cy="179.5445" r="1.9559999999999997" fill="#ffffff"/><rect x="11.2095" y="163" width="7.497999999999999" height="21.189999999999998" rx="1.63" fill="#ecbd2a"/><rect x="12.432" y="165.771" width="5.053" height="9.291" rx="0.652" fill="#ffffff"/><rect x="12.921" y="166.8305" width="4.074999999999999" height="1.2225" fill="#4a4a4a"/><rect x="12.921" y="169.7645" width="4.074999999999999" height="1.2225" fill="#4a4a4a"/><rect x="12.921" y="172.6985" width="4.074999999999999" height="1.2225" fill="#4a4a4a"/><circle cx="14.9585" cy="179.5445" r="1.9559999999999997" fill="#ffffff"/><rect x="20.419" y="163" width="7.497999999999999" height="21.189999999999998" rx="1.63" fill="#5131a6"/><rect x="21.6415" y="165.771" width="5.053" height="9.291" rx="0.652" fill="#ffffff"/><rect x="22.1305" y="166.8305" width="4.074999999999999" height="1.2225" fill="#4a4a4a"/><rect x="22.1305" y="169.7645" width="4.074999999999999" height="1.2225" fill="#4a4a4a"/><rect x="22.1305" y="172.6985" width="4.074999999999999" height="1.2225" fill="#4a4a4a"/><circle cx="24.168" cy="179.5445" r="1.9559999999999997" fill="#ffffff"/><rect x="2" y="185.005" width="26.08" height="2.9339999999999997" rx="0.652" fill="#e6b05e"/>
<path d="M9.7425 197.412 V194.804 Q9.7425 193.989 10.5575 193.989 H19.522499999999997 Q20.3375 193.989 20.3375 194.804 V197.412" fill="none" stroke="#6f6f6f" stroke-width="1.0594999999999999"/><rect x="2" y="197.575" width="26.08" height="20.9455" rx="1.793" fill="#5131a6"/><rect x="2" y="207.68099999999998" width="26.08" height="1.304" fill="#ffffff"/><rect x="11.943" y="204.095" width="6.193999999999999" height="8.475999999999999" rx="0.815" fill="#ffffff"/><rect x="12.921" y="205.073" width="4.2379999999999995" height="6.52" fill="#e6b05e"/>
<rect x="1" y="224.5" width="29.5" height="29.5" rx="3" fill="#feebb3"/>
<path d="M2.489 229.63 Q2.489 228.489 3.63 228.489 H26.45 Q27.590999999999998 228.489 27.590999999999998 229.63 V245.93 Q27.590999999999998 247.234 26.45 247.234 H23.842 L22.864 249.679 Q22.4565 250.82 21.233999999999998 250.82 H3.63 Q2.489 250.82 2.489 249.516 Z" fill="#ffffff" stroke="#666666" stroke-width="0.9779999999999999"/><path d="M2.489 229.63 Q2.489 228.163 3.63 228.163 H26.45 Q27.590999999999998 228.163 27.590999999999998 229.63 V231.749 H2.489 Z" fill="#5131a6"/><rect x="4.282" y="233.1345" width="21.516" height="1.3855" rx="0.48899999999999993" fill="#5a5a5a"/><rect x="4.445" y="236.23149999999998" width="5.705" height="1.4669999999999999" rx="0.48899999999999993" fill="#b4b4b4"/><rect x="11.78" y="236.23149999999998" width="5.705" height="1.4669999999999999" rx="0.48899999999999993" fill="#b4b4b4"/><rect x="18.7075" y="236.23149999999998" width="6.52" height="1.4669999999999999" rx="0.48899999999999993" fill="#5131a6"/><rect x="4.445" y="239.0025" width="5.705" height="1.4669999999999999" rx="0.48899999999999993" fill="#b4b4b4"/><rect x="11.78" y="239.0025" width="5.705" height="1.4669999999999999" rx="0.48899999999999993" fill="#b4b4b4"/><rect x="18.7075" y="239.0025" width="6.52" height="1.4669999999999999" rx="0.48899999999999993" fill="#5131a6"/><rect x="4.445" y="241.77349999999998" width="5.705" height="1.4669999999999999" rx="0.48899999999999993" fill="#b4b4b4"/><rect x="11.78" y="241.77349999999998" width="5.705" height="1.4669999999999999" rx="0.48899999999999993" fill="#b4b4b4"/><rect x="18.7075" y="241.77349999999998" width="6.52" height="1.4669999999999999" rx="0.48899999999999993" fill="#5131a6"/><path d="M11.291 250.82 L12.106 248.6195 H23.189999999999998 M17.485 248.6195 L16.833 250.82" fill="none" stroke="#666666" stroke-width="0.815"/>
<path d="M56.2 1023.2 L59.4 1020.2 L62.6 1023.4 L59.4 1026.4 Z" fill="#e6b05e"/>
<rect x="61.5" y="1015.6" width="3.6" height="4" fill="#e6b05e"/>
<circle cx="64.3" cy="1017.7" r="4.8" fill="none" stroke="#5131a6" stroke-width="1.8"/>
<path d="M67.8 1021.3 L73 1026.6" stroke="#5131a6" stroke-width="2" stroke-linecap="round"/>
<rect x="0.5" y="0.5" width="1756" height="1035" fill="none" stroke="#6e6e6e" stroke-width="1"/>
</svg>
</body></html>
